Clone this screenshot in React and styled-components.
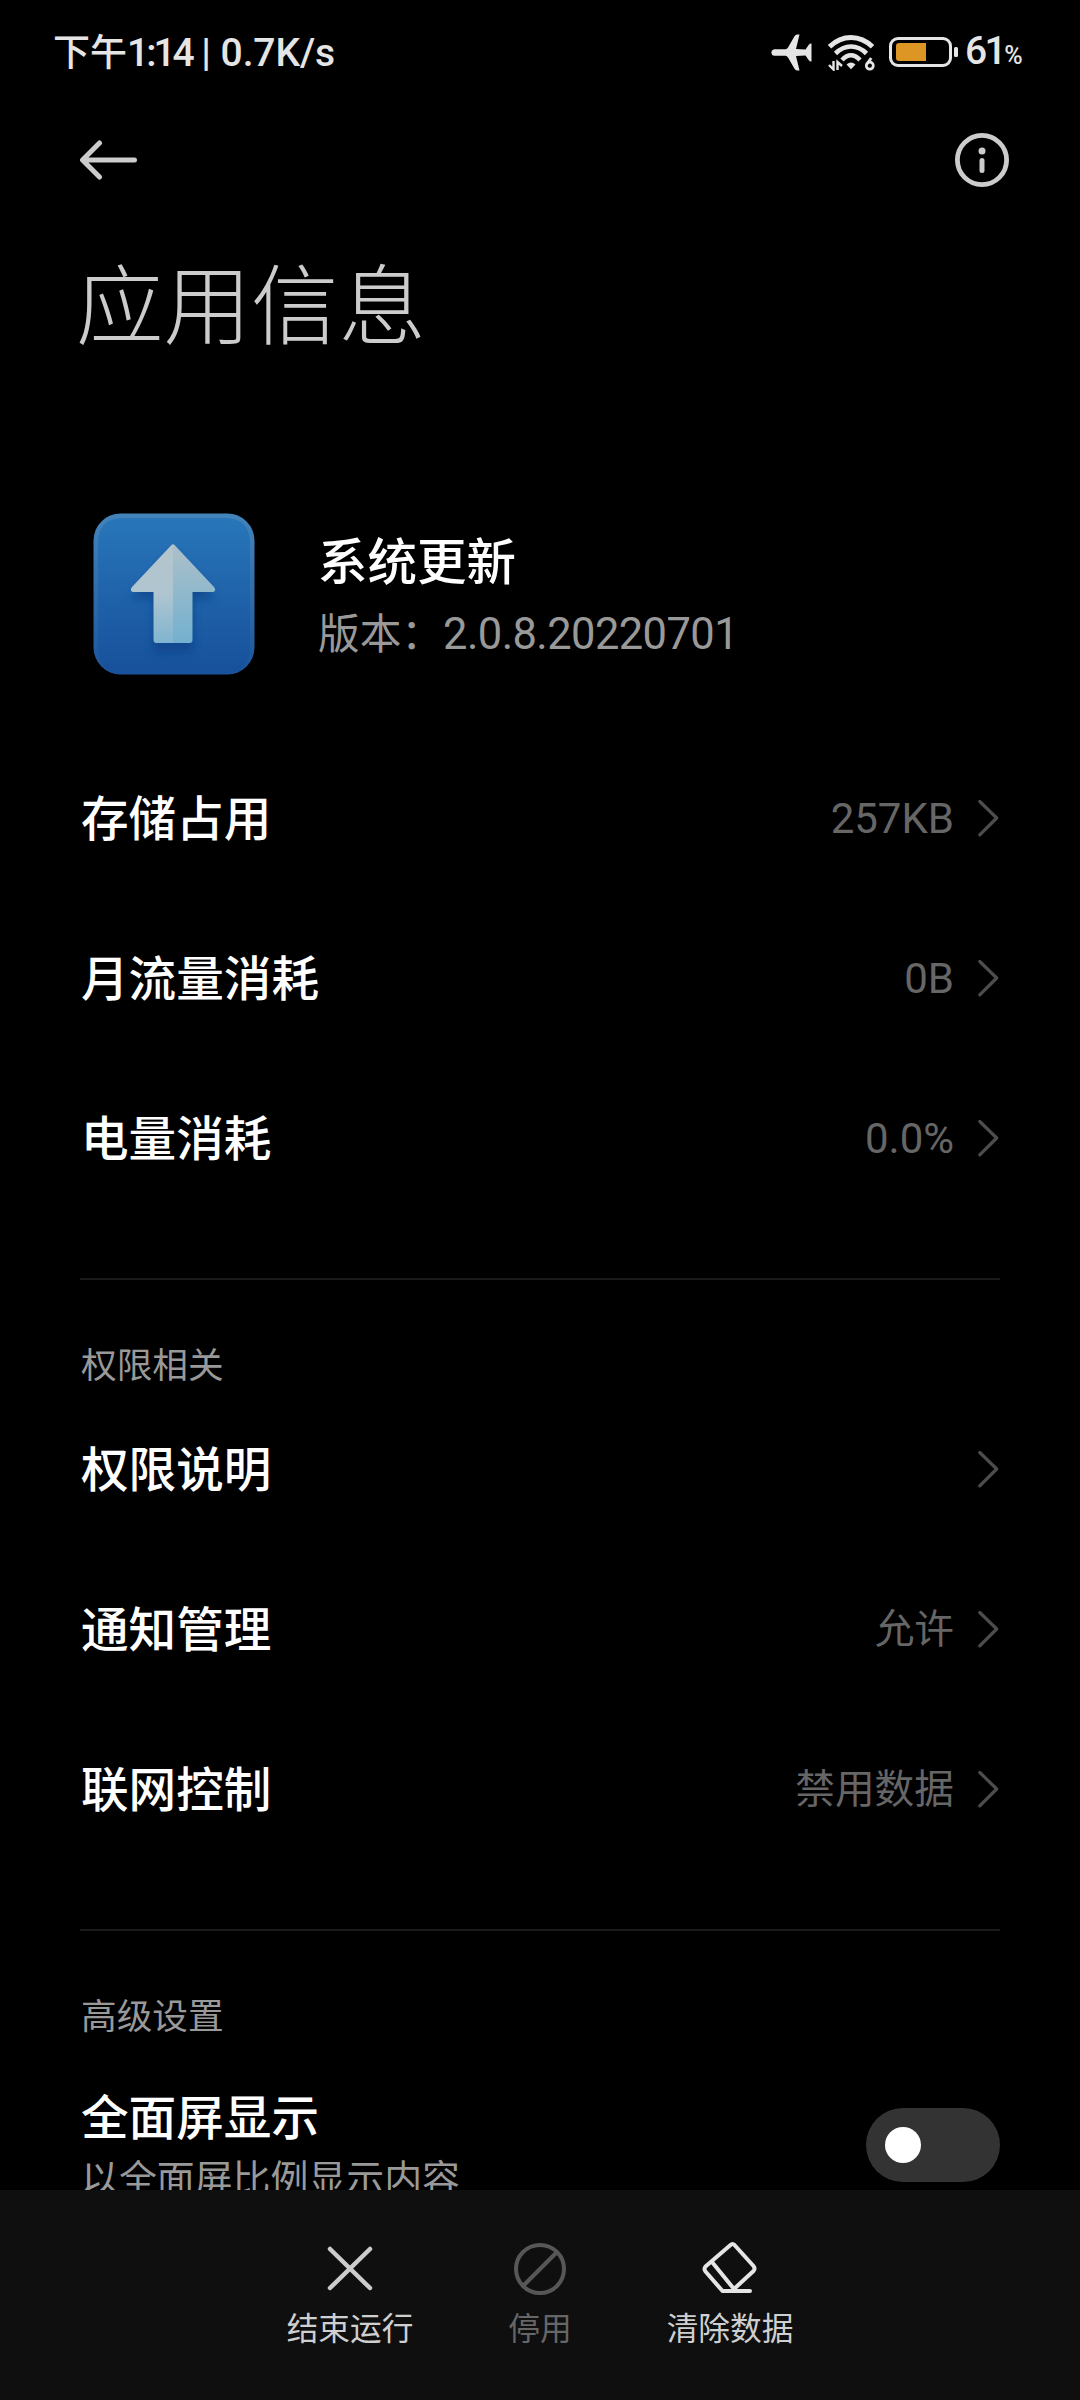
import React, { useState } from 'react';
import styled, { createGlobalStyle } from 'styled-components';

const GlobalStyle = createGlobalStyle`
  * {
    box-sizing: border-box;
  }
  body {
    margin: 0;
    background: #000000;
    font-family: Roboto, 'Noto Sans CJK SC', sans-serif;
  }
`;
const Screen = styled.div`
  display: flex;
  flex-direction: column;
  width: 1080px;
  height: 2400px;
  overflow: hidden;
  background: #000000;
`;
const StatusBar = styled.div`
  display: flex;
  flex: none;
  align-items: center;
  justify-content: space-between;
  height: 104px;
  padding: 0 57px 0 53px;
  color: #e5e5e5;
`;
const Clock = styled.div`
  padding-top: 3px;
  font-size: 37px;
  font-weight: 500;
  line-height: 60px;
  white-space: pre;
`;
const Latin = styled.span`
  font-size: ${props => props.$size}px;
  letter-spacing: ${props => props.$spacing || 0}px;
`;
const StatusIcons = styled.div`
  display: flex;
  align-items: center;
`;
const Percent = styled.div`
  width: 57px;
  margin-left: 6px;
  margin-right: 1px;
  padding-top: 3px;
  font-size: 39px;
  font-weight: 500;
  letter-spacing: -2.6px;
  line-height: 60px;
  white-space: nowrap;
`;
const PercentSign = styled.span`
  font-size: 25px;
`;
const WifiIcon = styled.svg`
  margin: 0 14px 0 16px;
`;
const ActionBar = styled.div`
  display: flex;
  flex: none;
  align-items: center;
  justify-content: space-between;
  height: 112px;
  padding: 0 70px 0 79px;
`;
const IconButton = styled.button`
  display: flex;
  padding: 0;
  border: 0;
  background: none;
  cursor: pointer;
`;
const Title = styled.h1`
  flex: none;
  height: 297px;
  margin: 0;
  padding: 32px 0 0 76px;
  color: #cccccc;
  font-size: 87.5px;
  font-weight: 200;
  line-height: 120px;
`;
const AppHeader = styled.div`
  display: flex;
  flex: none;
  height: 225px;
  padding-left: 93px;
`;
const AppText = styled.div`
  padding: 17px 0 0 63px;
`;
const AppName = styled.div`
  color: #ffffff;
  font-size: 49.5px;
  font-weight: 500;
  line-height: 66px;
`;
const AppVersion = styled.div`
  padding-top: 9px;
  color: #999999;
  font-size: 41.7px;
  font-weight: 400;
  line-height: 60px;
`;
const Content = styled.div`
  flex: 1;
  min-height: 0;
  overflow: hidden;
`;
const Row = styled.div`
  display: flex;
  align-items: center;
  height: 160px;
  padding: 0 80px 0 81px;
  cursor: pointer;
`;
const Label = styled.div`
  flex: 1;
  padding-top: 3px;
  color: #ffffff;
  font-size: 47.6px;
  font-weight: 500;
  line-height: 60px;
`;
const Value = styled.div`
  margin-right: 24px;
  padding-top: 2px;
  color: #666666;
  font-size: ${props => props.$size}px;
  line-height: 60px;
`;
const Divider = styled.div`
  height: 2px;
  margin: 60px 80px 0;
  background: #1a1a1a;
`;
const SectionTitle = styled.div`
  height: 109px;
  padding: 56px 0 0 81px;
  color: #999999;
  font-size: 35.7px;
  font-weight: 400;
  line-height: 60px;
`;
const SwitchRow = styled.div`
  display: flex;
  align-items: flex-start;
  padding: 46px 80px 0 81px;
`;
const SwitchText = styled.div`
  flex: 1;
`;
const Summary = styled.div`
  color: #999999;
  font-size: 37.9px;
  line-height: 60px;
`;
const Track = styled.button`
  display: flex;
  align-items: center;
  justify-content: ${props => (props.$on ? 'flex-end' : 'flex-start')};
  width: 134px;
  height: 74px;
  margin-top: 22px;
  padding: 0 19px;
  border: 0;
  border-radius: 37px;
  background: ${props => (props.$on ? '#277af7' : '#333333')};
  cursor: pointer;
`;
const Knob = styled.span`
  width: 36px;
  height: 36px;
  border-radius: 50%;
  background: #ffffff;
`;
const BottomBar = styled.div`
  display: flex;
  flex: none;
  justify-content: center;
  height: 210px;
  padding-top: 48px;
  background: #0f0f0f;
`;
const Action = styled.button`
  display: flex;
  flex-direction: column;
  align-items: center;
  width: 190px;
  padding: 0;
  border: 0;
  background: none;
  color: ${props => (props.disabled ? '#666666' : '#cfcfcf')};
  font-family: inherit;
  font-size: 31.7px;
  line-height: 64px;
`;

const AirplaneIcon = () => (
  <svg width="41" height="37" viewBox="0 0 41 37" fill="#e5e5e5">
    <path d="M3 15.300H14.500Q16 15 17 13.500L23.500 2.200Q24.500 .5 26 .5H28.500L25 15L34.500 15.500L38 10.500Q39 9.300 40.500 9.500V27.500Q39 27.700 38 26.500L34.500 21.500L25 22L28.500 36.500H26Q24.500 36.500 23.500 34.800L17 23.500Q16 22 14.500 21.700H3Q.3 21 .3 18.500Q.3 16 3 15.300Z" />
  </svg>
);

const Wifi6 = () => (
  <WifiIcon width="47" height="37" viewBox="0 0 47 37" fill="none" stroke="#e5e5e5">
    <path d="M1.500 12.800Q11 3.500 23 3.500T44.500 12.800" strokeWidth="5" />
    <path d="M7.500 19.500Q14.500 12.500 23 12.500T38.500 19.500" strokeWidth="4.600" />
    <path d="M14 26Q18.500 21.300 23 21.300T32 26" strokeWidth="4.500" />
    <path d="M18.500 30.500Q23 26.500 27.500 30.500L23 35.200Z" fill="#e5e5e5" stroke="none" />
    <path d="M5.500 27V35.500L1 31M9.500 36V28L14 32" strokeWidth="2.400" />
    <circle cx="41.800" cy="31.700" r="3.500" strokeWidth="2.700" />
    <path d="M43.200 24L38.900 30" strokeWidth="2.900" />
  </WifiIcon>
);

const BatteryIcon = () => (
  <svg width="70" height="32" viewBox="0 0 70 32">
    <rect x="1.500" y="2.500" width="60" height="27" rx="7.500" fill="none" stroke="#e5e5e5" strokeWidth="3" />
    <path d="M37 7V25H10Q7 25 7 22V10Q7 7 10 7Z" fill="#dd9623" />
    <rect x="65" y="11" width="4" height="10" rx="1.500" fill="#e5e5e5" />
  </svg>
);

const BackIcon = () => (
  <svg width="60" height="42" viewBox="0 0 60 42" fill="none" stroke="#cccccc" strokeWidth="5" strokeLinecap="round" strokeLinejoin="round">
    <path d="M20.500 4L3.500 21L20.500 38M4 21H55.500" />
  </svg>
);

const InfoIcon = () => (
  <svg width="56" height="56" viewBox="0 0 56 56">
    <circle cx="28" cy="28" r="24.600" fill="none" stroke="#cccccc" strokeWidth="4.800" />
    <circle cx="28" cy="19" r="3.500" fill="#cccccc" />
    <rect x="25.500" y="26" width="5" height="15" rx="2.500" fill="#cccccc" />
  </svg>
);

const UpdateIcon = () => (
  <svg width="162" height="162" viewBox="0 0 162 162">
    <defs>
      <linearGradient id="tile" x1="0" y1="0" x2="0" y2="1">
        <stop offset="0" stopColor="#2876b9" />
        <stop offset="1" stopColor="#17509b" />
      </linearGradient>
      <linearGradient id="rim" x1="0" y1="0" x2="0" y2="1">
        <stop offset="0" stopColor="#4384bb" />
        <stop offset="1" stopColor="#1c549c" />
      </linearGradient>
      <linearGradient id="arrowLeft" x1="0" y1="0" x2="0" y2="1">
        <stop offset="0" stopColor="#b4c4cb" />
        <stop offset="0.500" stopColor="#afc5d0" />
        <stop offset="1" stopColor="#7db4d0" />
      </linearGradient>
      <linearGradient id="arrowRight" x1="0" y1="0" x2="0" y2="1">
        <stop offset="0" stopColor="#adc0c9" />
        <stop offset="1" stopColor="#72b0cf" />
      </linearGradient>
      <filter id="soft" x="-30%" y="-30%" width="160%" height="160%">
        <feGaussianBlur stdDeviation="4" />
      </filter>
      <clipPath id="arrowClip">
        <path d="M78.500 32Q80 30.500 81.500 32L121 74Q122.500 76 122 77.500Q121.500 79 119.500 79H99.500V127Q99.500 130 96.500 130H63.500Q60.500 130 60.500 127V79H40.500Q38.500 79 38 77.500Q37.500 76 39 74Z" />
      </clipPath>
    </defs>
    <rect x=".5" y=".5" width="161" height="161" rx="27" fill="url(#rim)" />
    <path d="M30 5H132Q157 5 157 31V135Q157 160.500 132 160.500H30Q5 160.500 5 135V31Q5 5 30 5Z" fill="url(#tile)" />
    <path d="M80 40L122 86H99.500V139H60.500V86H38Z" fill="#0c4288" opacity=".75" filter="url(#soft)" />
    <g clipPath="url(#arrowClip)">
      <rect x="36" y="30" width="44" height="102" fill="url(#arrowLeft)" />
      <rect x="80" y="30" width="44" height="102" fill="url(#arrowRight)" />
    </g>
  </svg>
);

const Chevron = () => (
  <svg width="22" height="40" viewBox="0 0 22 40" fill="none" stroke="#4d4d4d" strokeWidth="3.200" strokeLinecap="round" strokeLinejoin="round">
    <path d="M1.800 3.500L18.700 20L1.800 36.800" />
  </svg>
);

const StopIcon = () => (
  <svg width="60" height="60" viewBox="0 0 60 60" fill="none" stroke="#cccccc" strokeWidth="4.500" strokeLinecap="round">
    <path d="M10 11L50 50M50 11L10 50" />
  </svg>
);

const DisableIcon = () => (
  <svg width="60" height="60" viewBox="0 0 60 60" fill="none" stroke="#575757" strokeWidth="4">
    <path d="M14 47L47 14" />
    <circle cx="30" cy="31" r="24" />
  </svg>
);

const EraserIcon = () => (
  <svg width="60" height="60" viewBox="0 0 60 60" fill="none" stroke="#e5e5e5" strokeWidth="4" strokeLinecap="round" strokeLinejoin="round">
    <path d="M22.500 53H50M34 51L53.500 33Q55.500 30.500 53.500 28L34.500 7Q32.500 5 30.500 7L5.500 28.500Q3.500 31 5.500 33.500L22.500 53M12 24L34 51" />
  </svg>
);

const usage = [
  { label: '存储占用', value: '257KB' },
  { label: '月流量消耗', value: '0B' },
  { label: '电量消耗', value: '0.0%' }
];
const permissions = [
  { label: '权限说明' },
  { label: '通知管理', value: '允许' },
  { label: '联网控制', value: '禁用数据' }
];

const Item = ({ label, value, size }) => (
  <Row>
    <Label>{label}</Label>
    {value ? <Value $size={size}>{value}</Value> : null}
    <Chevron />
  </Row>
);

const App = () => {
  const [fullScreen, setFullScreen] = useState(false);

  return (
    <Screen>
      <GlobalStyle />
      <StatusBar>
        <Clock>
          下午<Latin $size={39} $spacing={-3}>1:14</Latin>
          <Latin $size={39} $spacing={-0.1}> | 0.7K/s</Latin>
        </Clock>
        <StatusIcons>
          <AirplaneIcon />
          <Wifi6 />
          <BatteryIcon />
          <Percent>61<PercentSign>%</PercentSign></Percent>
        </StatusIcons>
      </StatusBar>
      <ActionBar>
        <IconButton><BackIcon /></IconButton>
        <IconButton><InfoIcon /></IconButton>
      </ActionBar>
      <Title>应用信息</Title>
      <AppHeader>
        <UpdateIcon />
        <AppText>
          <AppName>系统更新</AppName>
          <AppVersion>版本：<Latin $size={43.5} $spacing={-0.6}>2.0.8.20220701</Latin></AppVersion>
        </AppText>
      </AppHeader>
      <Content>
        {usage.map(item => <Item key={item.label} {...item} size={42} />)}
        <Divider />
        <SectionTitle>权限相关</SectionTitle>
        {permissions.map(item => <Item key={item.label} {...item} size={39.7} />)}
        <Divider />
        <SectionTitle>高级设置</SectionTitle>
        <SwitchRow>
          <SwitchText>
            <Label>全面屏显示</Label>
            <Summary>以全面屏比例显示内容</Summary>
          </SwitchText>
          <Track $on={fullScreen} onClick={() => setFullScreen(!fullScreen)}>
            <Knob />
          </Track>
        </SwitchRow>
      </Content>
      <BottomBar>
        <Action><StopIcon />结束运行</Action>
        <Action disabled><DisableIcon />停用</Action>
        <Action><EraserIcon />清除数据</Action>
      </BottomBar>
    </Screen>
  );
};

export default App;
